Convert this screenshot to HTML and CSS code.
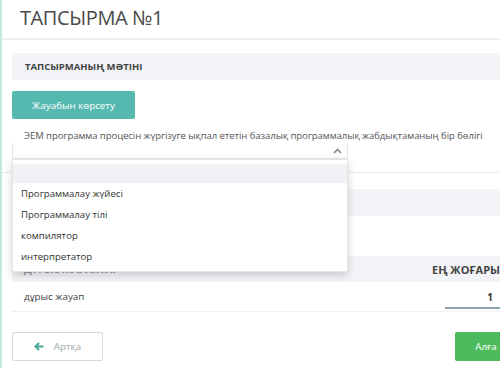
FILE: index.html
```html
<!DOCTYPE html>
<html lang="kk">
<head>
    <meta charset="UTF-8">
    <meta name="viewport" content="width=device-width, initial-scale=1.0">
    <title>Тапсырма №1</title>
    <link rel="stylesheet" href="styles.css">
</head>
<body>
    <div id="page">
        <div id="top">
            <h1>ТАПСЫРМА №1</h1>
        </div>

        <div id="wrap">
            <div class="sec-head">ТАПСЫРМАНЫҢ МӘТІНІ</div>
            <button class="btn-teal">Жауабын көрсету</button>

            <p class="question">ЭЕМ программа процесін жүргізуге ықпал ететін базалық программалық жабдықтаманың бір бөлігі</p>
            <div class="select-box">
                <div class="select">
                    <svg class="chev" width="9" height="6" viewBox="0 0 9 6"><path d="M1 5 L4.5 1.5 L8 5" fill="none" stroke="#888" stroke-width="1.6"/></svg>
                </div>
                <ul class="dropdown">
                    <li class="active">&nbsp;</li>
                    <li>Программалау жүйесі</li>
                    <li>Программалау тілі</li>
                    <li>компилятор</li>
                    <li>интерпретатор</li>
                </ul>
            </div>
        </div>

        <div id="wrap2">
            <div class="sec-head">БАҒАЛАУ</div>
            <div class="gap"></div>
            <div class="trow thead">
                <div class="c1">ДҰРЫС ЖАУАПТАР</div>
                <div class="c2">ЕҢ ЖОҒАРЫ</div>
            </div>
            <div class="trow">
                <div class="c1">дұрыс жауап</div>
                <div class="c2"><div class="score">1</div></div>
            </div>

            <div class="nav">
                <button class="btn-back">
                    <svg width="10" height="9" viewBox="0 0 10 9"><path d="M9.5 4.5 H2 M5 1 L1.5 4.5 L5 8" fill="none" stroke="#4aa89b" stroke-width="2.2"/></svg>
                    Артқа
                </button>
                <button class="btn-next">Алға</button>
            </div>
        </div>
    </div>
</body>
</html>
```

FILE: styles.css
```css
*{
    margin: 0;
    padding: 0;
    box-sizing: border-box;
    font-family: "Open Sans", "Noto Sans", sans-serif;
}
html,body{
    width: 100%;
    height: 100%;
    overflow: hidden;
    background: #fff;
}
body{
    border-left: 2px solid #c5e6e3;
}
#page{
    width: 515px;
}
#top{
    height: 40px;
    padding: 4px 0 0 18px;
    border-bottom: 1px solid #e9ecef;
    box-shadow: 0 -3px 0 -2px #f2f2f2 inset;
}
h1{
    font-size: 20px;
    font-weight: 400;
    color: #4a4a4a;
    letter-spacing: -0.4px;
}
#wrap{
    padding: 13px 0 0 10px;
    height: 133px;
    border-bottom: 1px solid #e9ecef;
}
.sec-head{
    height: 27px;
    background-color: #f3f4f7;
    display: flex;
    align-items: center;
    padding-left: 13px;
    font-size: 9.5px;
    font-weight: 700;
    color: #444;
}
.btn-teal{
    margin-top: 11px;
    width: 123px;
    height: 28px;
    border: none;
    border-radius: 2px;
    background-color: #55b9b0;
    color: #fff;
    font-size: 9.8px;
}
.question{
    margin-top: 10px;
    padding-left: 12px;
    font-size: 9.5px;
    letter-spacing: -0.05px;
    line-height: 14px;
    color: #555;
    white-space: nowrap;
}
.select-box{
    position: relative;
    width: 336px;
}
.select{
    height: 16px;
    border: 1px solid #e4e6ea;
    border-top: none;
    display: flex;
    justify-content: flex-end;
    align-items: center;
    padding-right: 5px;
}
.dropdown{
    position: absolute;
    top: 16px;
    left: 0;
    width: 336px;
    background: #fff;
    list-style: none;
    padding: 4px 0 4px;
    border: 1px solid #e6e6e6;
    box-shadow: 0 3px 8px rgba(0,0,0,0.18);
    z-index: 5;
}
.dropdown li{
    height: 21px;
    line-height: 21px;
    padding-left: 8px;
    font-size: 9.6px;
    color: #333;
}
.dropdown li.active{
    height: 19px;
    background-color: #eff1f4;
}
#wrap2{
    padding: 16px 0 0 10px;
}
.gap{
    height: 40px;
}
.trow{
    display: flex;
    height: 30px;
    align-items: center;
    border-bottom: 1px solid #eef0f2;
    font-size: 9.8px;
    color: #444;
}
.thead{
    height: 26px;
    background-color: #f3f4f7;
    border: none;
    font-size: 10px;
    font-weight: 700;
    color: #999;
}
.trow .c1{
    flex: 1;
    padding-left: 12px;
}
.thead .c2{
    color: #444;
    font-size: 11px;
}
.c2{
    width: 85px;
}
.score{
    margin-left: 13px;
    width: 90px;
    height: 24px;
    border-bottom: 2px solid #8fa4b3;
    text-align: center;
    line-height: 24px;
    font-weight: 700;
    font-size: 10px;
    color: #333;
}
.nav{
    margin-top: 20px;
    display: flex;
    justify-content: space-between;
}
.btn-back{
    width: 91px;
    height: 29px;
    border: 1px solid #d3dcdc;
    border-radius: 2px;
    background: #fff;
    color: #a4abab;
    font-size: 9.8px;
    display: flex;
    align-items: center;
    justify-content: center;
    gap: 10px;
}
.btn-next{
    width: 62px;
    height: 29px;
    border: none;
    border-radius: 2px;
    background-color: #4dbb5d;
    color: #fff;
    font-size: 9.8px;
}
```
